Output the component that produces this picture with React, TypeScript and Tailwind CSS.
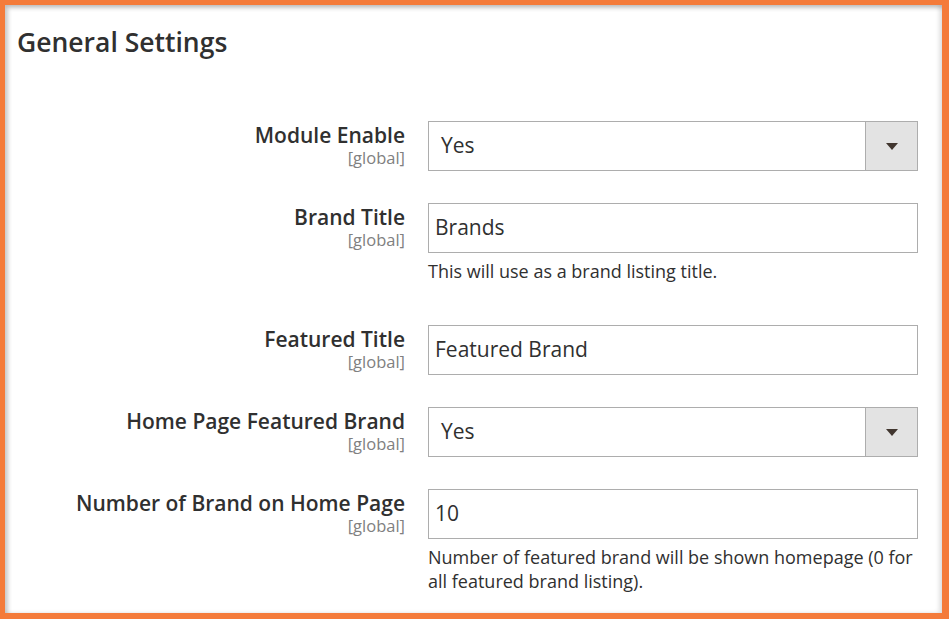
import React from "react";

type Row = {
  label: string;
  kind: "select" | "input";
  value: string;
  note?: string;
};

const rows: Row[] = [
  { label: "Module Enable", kind: "select", value: "Yes" },
  {
    label: "Brand Title",
    kind: "input",
    value: "Brands",
    note: "This will use as a brand listing title.",
  },
  { label: "Featured Title", kind: "input", value: "Featured Brand" },
  { label: "Home Page Featured Brand", kind: "select", value: "Yes" },
  {
    label: "Number of Brand on Home Page",
    kind: "input",
    value: "10",
    note: "Number of featured brand will be shown homepage (0 for all featured brand listing).",
  },
];

const Control = ({ row }: { row: Row }) => {
  if (row.kind === "select") {
    return (
      <div className="flex h-[50px] w-[490px] border border-[#adadad] bg-white">
        <div className="flex flex-1 items-center pl-[12px] text-[21px] text-[#303030]">
          {row.value}
        </div>
        <div className="flex w-[52px] items-center justify-center border-l border-[#adadad] bg-[#e3e3e3]">
          <span className="block h-0 w-0 border-x-[6px] border-t-[7px] border-x-transparent border-t-[#41362f]" />
        </div>
      </div>
    );
  }
  return (
    <div className="flex h-[50px] w-[490px] items-center border border-[#adadad] bg-white pl-[6px] text-[21px] text-[#303030]">
      {row.value}
    </div>
  );
};

export default function App() {
  return (
    <div
      className="h-[619px] w-[949px] overflow-hidden bg-[#f47b3a] pt-[5px] pr-[7px] pb-[6px] pl-[5px]"
      style={{ fontFamily: '"Open Sans", sans-serif' }}
    >
      <div className="h-full w-full bg-white shadow-[inset_3px_3px_4px_rgba(0,0,0,0.22),inset_-3px_0_4px_rgba(0,0,0,0.12)]">
        <h2 className="pl-[12px] pt-[20px] text-[26.5px] font-semibold leading-[34px] text-[#303030]">
          General Settings
        </h2>
        <div className="mt-[62px] flex flex-col gap-[32px]">
          {rows.map((row) => (
            <div key={row.label} className="flex items-start">
              <div className="flex w-[400px] flex-col items-end">
                <span className="text-[21px] font-semibold leading-[28px] text-[#303030]">
                  {row.label}
                </span>
                <span className="text-[16.5px] leading-[18px] text-[#808080]">
                  [global]
                </span>
              </div>
              <div className="ml-[23px] flex flex-col">
                <Control row={row} />
                {row.note && (
                  <p className="mb-[10px] mt-[6px] w-[490px] text-[18px] leading-[24px] text-[#303030]">
                    {row.note}
                  </p>
                )}
              </div>
            </div>
          ))}
        </div>
      </div>
    </div>
  );
}
